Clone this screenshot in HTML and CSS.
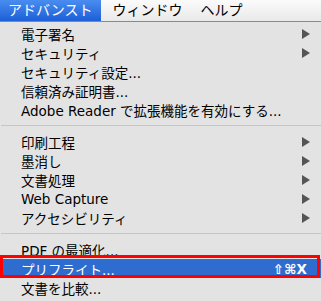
FILE: index.html
```html
<!DOCTYPE html>
<html lang="ja">
<head>
    <meta charset="UTF-8">
    <title>アドバンスト</title>
    <link rel="stylesheet" href="styles.css">
</head>
<body>
    <div class="menubar">
        <span class="menubar-item active">アドバンスト</span>
        <span class="menubar-item">ウィンドウ</span>
        <span class="menubar-item">ヘルプ</span>
    </div>
    <ul class="menu">
        <li class="item sub">電子署名</li>
        <li class="item sub">セキュリティ</li>
        <li class="item">セキュリティ設定...</li>
        <li class="item">信頼済み証明書...</li>
        <li class="item">Adobe Reader で拡張機能を有効にする...</li>
        <li class="sep"></li>
        <li class="item sub">印刷工程</li>
        <li class="item sub">墨消し</li>
        <li class="item sub">文書処理</li>
        <li class="item sub">Web Capture</li>
        <li class="item sub">アクセシビリティ</li>
        <li class="sep"></li>
        <li class="item">PDF の最適化...</li>
        <li class="item selected">プリフライト...<span class="key">⇧⌘X</span></li>
        <li class="item">文書を比較...</li>
    </ul>
</body>
</html>
```

FILE: styles.css
```css
body { margin: 0; width: 321px; height: 301px; overflow: hidden; background: #e3e3e3; font-family: "DejaVu Sans", "Noto Sans CJK JP", sans-serif; font-size: 13.5px; color: #000; }
.menubar { display: flex; height: 21px; border-bottom: 1px solid #8a8a8a; background: linear-gradient(#fbfbfb, #e9e9e9); white-space: nowrap; font-size: 14px; }
.menubar-item { display: flex; align-items: center; padding: 0 9px; line-height: 21px; }
.menubar-item.active { color: #fff; background: linear-gradient(#4a8df0, #1c5fd8); padding-left: 8px; }
.menubar-item + .menubar-item { margin-left: 2px; }
.menubar-item:last-child { margin-left: 0; }
.menu { list-style: none; margin: 0; padding: 2px 0 0; }
.item { position: relative; display: flex; align-items: center; height: 19px; padding: 0 11px 0 21px; white-space: nowrap; }
.item.sub::after { content: ""; margin-left: auto; border-left: 8px solid #555; border-top: 5px solid transparent; border-bottom: 5px solid transparent; }
.sep { height: 13px; display: flex; align-items: center; }
.sep::before { content: ""; flex: 1; height: 1px; background: #c6c6c6; margin-left: 1px; }
.selected { color: #fff; background: #2f6ccf; }
.selected::before { content: ""; position: absolute; top: -4px; bottom: 0; left: 0; right: 1px; border: 3px solid #ff0000; }
.key { margin-left: auto; margin-right: 3px; font-weight: bold; }
```
